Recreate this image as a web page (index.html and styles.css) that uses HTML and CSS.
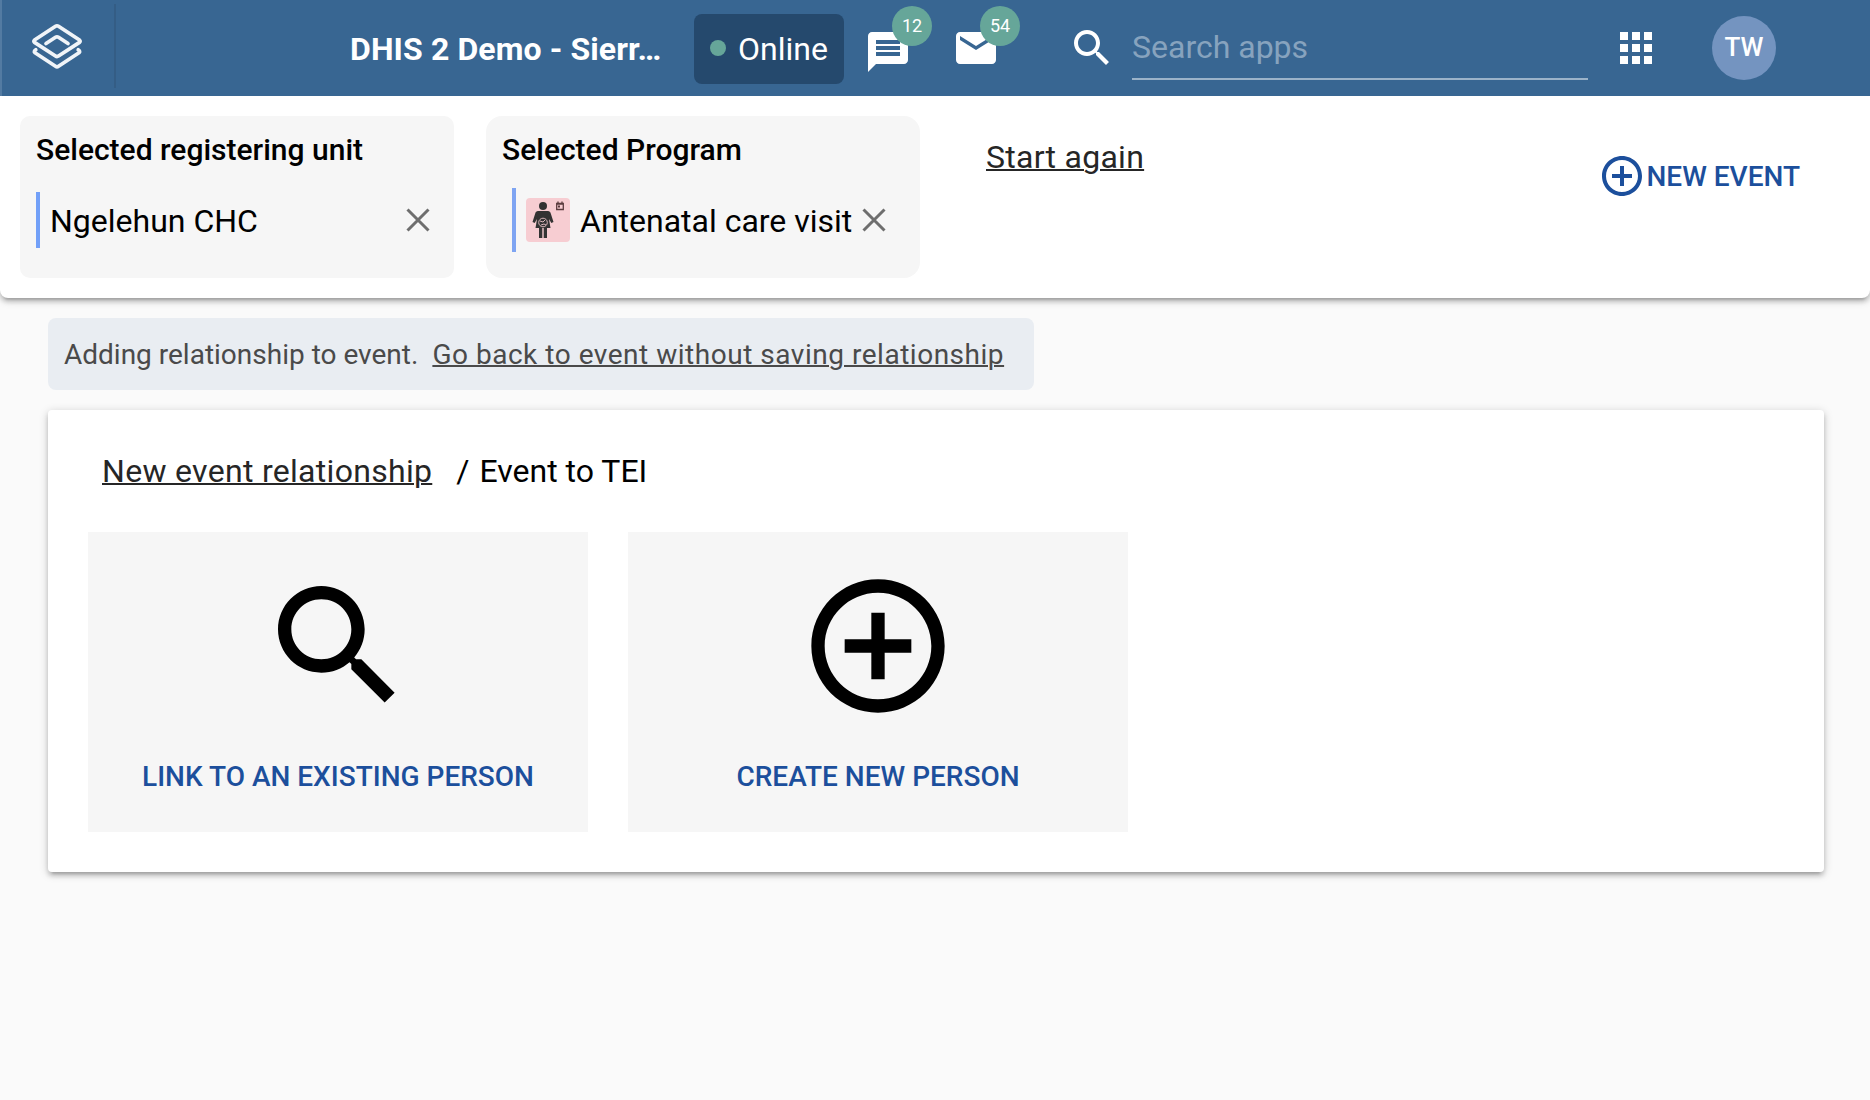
FILE: index.html
```html
<!DOCTYPE html>
<html lang="en">
<head>
<meta charset="utf-8">
<title>Capture</title>
<link rel="stylesheet" href="styles.css">
</head>
<body>
<header class="topbar">
  <a class="logo"><svg width="52" height="48" viewBox="0 0 52 48" fill="none" stroke="#f0f4f8" stroke-width="3.7" stroke-linejoin="round" stroke-linecap="round"><path d="M24.500 3.300Q26 2.300 27.500 3.300L48.500 17Q49.800 18.200 48.500 19.400L27.500 33Q26 34 24.500 33L3.500 19.400Q2.200 18.200 3.500 17Z"/><path d="M15 20.500L24.500 14.300Q26 13.300 27.500 14.300L37 20.500"/><path d="M4.800 26.800Q2.300 28.500 4 29.800L24.500 43.300Q26 44.300 27.500 43.300L48 29.800Q49.700 28.500 47.200 26.800"/></svg></a>
  <h1 class="instance">DHIS 2 Demo - Sierr…</h1>
  <div class="status"><i class="status-dot"></i><span>Online</span></div>
  <a class="notice notice-chat"><svg width="48" height="48" viewBox="0 0 24 24" fill="#fff"><path d="M20 2H4c-1.100 0-2 .9-2 2v18l4-4h14c1.100 0 2-.9 2-2V4c0-1.100-.9-2-2-2zM18 14H6v-2h12v2zm0-3H6V9h12v2zm0-3H6V6h12v2z"/></svg><b class="badge">12</b></a>
  <a class="notice"><svg width="48" height="48" viewBox="0 0 24 24" fill="#fff"><path d="M20 4H4c-1.100 0-2 .9-2 2v12c0 1.100.9 2 2 2h16c1.100 0 2-.9 2-2V6c0-1.100-.9-2-2-2zm0 4l-8 5-8-5V6l8 5 8-5v2z"/></svg><b class="badge">54</b></a>
  <svg class="search-icon" width="48" height="48" viewBox="0 0 24 24" fill="#fff"><path d="M15.500 14h-.79l-.28-.27C15.410 12.590 16 11.110 16 9.500 16 5.910 13.090 3 9.500 3S3 5.910 3 9.500 5.910 16 9.500 16c1.610 0 3.090-.59 4.230-1.570l.27.28v.79l5 4.990L20.490 19l-4.990-5zm-6 0C7.010 14 5 11.990 5 9.500S7.010 5 9.500 5 14 7.010 14 9.500 11.990 14 9.500 14z"/></svg>
  <div class="search">Search apps</div>
  <svg class="apps" width="48" height="48" viewBox="0 0 24 24" fill="#fff"><path d="M4 8h4V4H4v4zm6 12h4v-4h-4v4zm-6 0h4v-4H4v4zm0-6h4v-4H4v4zm6 0h4v-4h-4v4zm6-10v4h4V4h-4zm-6 4h4V4h-4v4zm6 6h4v-4h-4v4zm0 6h4v-4h-4v4z"/></svg>
  <div class="avatar">TW</div>
</header>
<section class="selector">
  <div class="pick">
    <h2 class="pick-title">Selected registering unit</h2>
    <div class="pick-row">
      <span class="pick-value">Ngelehun CHC</span>
      <svg class="close" width="24" height="24" viewBox="0 0 24 24" stroke="#6e6e6e" stroke-width="3"><path d="M1.500 1.500l21 21M22.500 1.500l-21 21"/></svg>
    </div>
  </div>
  <div class="pick pick-program">
    <h2 class="pick-title">Selected Program</h2>
    <div class="pick-row">
      <svg class="program-icon" width="44" height="44" viewBox="0 0 44 44"><rect width="44" height="44" rx="4" fill="#f7cdd2"/><g fill="#333"><circle cx="17" cy="8" r="4"/><path d="M12 13h10c1.500 0 2.300 1 2.700 2.200L27.500 24l-2.200 1-2.300-4 1.500 9H21v10h-3.300V30h-1.400v10H13V30H9.500l1.500-9-2.300 4-2.200-1 2.800-8.800C9.700 14 10.500 13 12 13z"/></g><circle cx="17" cy="24.500" r="4.300" fill="none" stroke="#d8b5b9" stroke-width="1"/><path d="M14 23l3 1 2-2M15 27l3-1 2 1" fill="none" stroke="#d8b5b9"/><path d="M30.700 5.500h6.600v6h-6.600zM30.500 6h7M32 3.500v2M36 3.500v2" fill="none" stroke="#5a3b3e" stroke-width="1.300"/><path d="M32 7.500h2v2h-2z" fill="#5a3b3e"/></svg>
      <span class="pick-value">Antenatal care visit</span>
      <svg class="close" width="24" height="24" viewBox="0 0 24 24" stroke="#6e6e6e" stroke-width="3"><path d="M1.500 1.500l21 21M22.500 1.500l-21 21"/></svg>
    </div>
  </div>
  <a class="restart">Start again</a>
  <a class="new-event"><svg width="48" height="48" viewBox="0 0 24 24" fill="#1c4f9c"><path d="M13 7h-2v4H7v2h4v4h2v-4h4v-2h-4V7zm-1-5C6.480 2 2 6.480 2 12s4.480 10 10 10 10-4.480 10-10S17.520 2 12 2zm0 18c-4.410 0-8-3.590-8-8s3.590-8 8-8 8 3.590 8 8-3.590 8-8 8z"/></svg><span>NEW EVENT</span></a>
</section>
<main class="content">
  <div class="hint"><span>Adding relationship to event.</span><a class="hint-link">Go back to event without saving relationship</a></div>
  <section class="card">
    <nav class="crumbs"><a class="crumb-link">New event relationship</a><span class="slash">/</span><span>Event to TEI</span></nav>
    <div class="tiles">
      <button class="tile"><svg width="160" height="160" viewBox="0 0 24 24"><path d="M15.500 14h-.79l-.28-.27C15.410 12.590 16 11.110 16 9.500 16 5.910 13.090 3 9.500 3S3 5.910 3 9.500 5.910 16 9.500 16c1.610 0 3.090-.59 4.230-1.570l.27.28v.79l5 4.990L20.490 19l-4.990-5zm-6 0C7.010 14 5 11.990 5 9.500S7.010 5 9.500 5 14 7.010 14 9.500 11.990 14 9.500 14z"/></svg><span>LINK TO AN EXISTING PERSON</span></button>
      <button class="tile"><svg width="160" height="160" viewBox="0 0 24 24"><path d="M13 7h-2v4H7v2h4v4h2v-4h4v-2h-4V7zm-1-5C6.480 2 2 6.480 2 12s4.480 10 10 10 10-4.480 10-10S17.520 2 12 2zm0 18c-4.410 0-8-3.590-8-8s3.590-8 8-8 8 3.590 8 8-3.590 8-8 8z"/></svg><span>CREATE NEW PERSON</span></button>
    </div>
  </section>
</main>
</body>
</html>
```
FILE: styles.css
```css
* { box-sizing: border-box; }
body {
  min-height: 100vh;
  margin: 0;
  background: #fafafa;
  color: #000;
  font-family: Roboto, "Liberation Sans", sans-serif;
  font-size: 32px;
}
h1, h2 { margin: 0; font-size: inherit; }
svg { display: block; flex: none; }

.topbar {
  display: flex;
  align-items: center;
  height: 96px;
  background: #386692;
  border-left: 2px solid #537ba2;
  color: #fff;
}
.logo {
  width: 114px;
  height: 84px;
  margin-bottom: 4px;
  padding: 19px 0 0 28.5px;
  border-right: 2px solid #345d85;
}
.instance {
  width: 344px;
  margin: 2px 0 0 234px;
  font-weight: 700;
  letter-spacing: .1px;
  white-space: nowrap;
}
.status {
  display: flex;
  align-items: center;
  gap: 12px;
  width: 150px;
  height: 70px;
  margin-top: 2px;
  padding-left: 16px;
  border-radius: 8px;
  background: #25496d;
}
.status-dot {
  width: 16px;
  height: 16px;
  margin-top: -2px;
  border-radius: 50%;
  background: #66a699;
}
.notice { position: relative; margin-left: 40px; }
.notice-chat { margin: 8px 0 0 20px; }
.badge {
  position: absolute;
  top: -18px;
  left: 28px;
  width: 40px;
  height: 40px;
  border-radius: 50%;
  background: #66a699;
  font-size: 18px;
  font-weight: 400;
  line-height: 39px;
  text-align: center;
}
.notice-chat .badge { top: -22px; }
.search-icon { margin-left: 68px; }
.search {
  width: 456px;
  height: 64px;
  margin-left: 16px;
  border-bottom: 2px solid #9bb3c9;
  color: #87a3be;
  line-height: 62px;
}
.apps { margin-left: 24px; }
.avatar {
  width: 64px;
  height: 64px;
  margin-left: 52px;
  border-radius: 50%;
  background: #7494c0;
  font-size: 26px;
  font-weight: 500;
  line-height: 62px;
  text-align: center;
}

.selector {
  display: flex;
  align-items: flex-start;
  height: 202px;
  padding: 20px;
  border-radius: 0 0 8px 8px;
  background: #fff;
  box-shadow: 0 2px 10px rgba(0,0,0,.2), 0 4px 4px rgba(0,0,0,.14), 0 6px 2px -4px rgba(0,0,0,.12);
  /* keep the shadow off the top bar */
  clip-path: inset(0 0 -20px 0);
}
.pick {
  width: 434px;
  height: 162px;
  padding: 16px;
  border-radius: 10px;
  background: #f6f6f6;
}
.pick-title { font-size: 30px; font-weight: 500; line-height: 36px; }
.pick-row {
  display: flex;
  align-items: center;
  height: 56px;
  margin-top: 24px;
  padding: 0 8px 0 10px;
  border-left: 4px solid #72a0f8;
}
.pick-value { flex: 1; padding-top: 2px; white-space: nowrap; }
.pick-program { margin-left: 32px; border-radius: 16px; }
.pick-program .pick-row {
  gap: 10px;
  height: 64px;
  margin: 20px 0 0 10px;
  padding: 0 18px 0 10px;
  border-color: #7ea4f2;
}
.restart, .crumb-link, .hint-link {
  text-decoration: underline;
  text-decoration-thickness: 2px;
}
.restart { margin: 22px 0 0 66px; color: #262626; letter-spacing: .27px; }
.new-event {
  display: flex;
  align-items: center;
  margin: 36px 50px 0 auto;
  color: #1c4f9c;
  font-size: 28px;
  font-weight: 500;
}

.content { padding: 20px 46px 0 48px; }
.hint {
  display: flex;
  align-items: center;
  width: 986px;
  height: 72px;
  padding-left: 16px;
  border-radius: 8px;
  background: #e9edf2;
  color: #4a4a4a;
  font-size: 28px;
}
.hint-link { margin-left: 14px; letter-spacing: .52px; }
.card {
  height: 462px;
  margin-top: 20px;
  padding: 40px;
  border-radius: 4px;
  background: #fff;
  box-shadow: 0 2px 10px rgba(0,0,0,.2), 0 4px 4px rgba(0,0,0,.14), 0 6px 2px -4px rgba(0,0,0,.12);
}
.crumbs { display: flex; height: 82px; padding-left: 14px; line-height: 42px; }
.crumb-link { color: #262626; letter-spacing: .3px; }
.slash { margin: 0 10px 0 24px; }
.tiles { display: flex; gap: 40px; }
.tile {
  display: flex;
  flex-direction: column;
  align-items: center;
  gap: 33px;
  width: 500px;
  height: 300px;
  padding: 34px 0 0;
  border: 0;
  background: #f6f6f6;
  color: #1c4f9c;
  font: 500 28px/36px Roboto, sans-serif;
}
.tile svg { fill: #000; }
```
